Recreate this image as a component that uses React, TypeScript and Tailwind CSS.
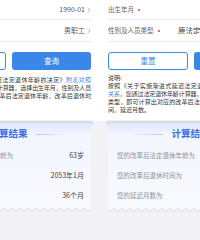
import React from 'react';

type Variant = 'left' | 'right';

const rows = [
  { label: '您的改革后法定退休年龄为', value: '63岁' },
  { label: '您的改革后退休时间为', value: '2053年1月' },
  { label: '您的延迟月数为', value: '36个月' },
];

// wave edge under the result card
const waveD = (() => {
  let d = 'M0,2';
  for (let x = 0; x < 168; x += 8) d += ' q2,3 4,0 q2,-3 4,0';
  return d;
})();

const Chevron = () => (
  <svg width="4" height="6" viewBox="0 0 4 6" className="ml-[2px]">
    <polyline points="0.5,0.5 3,3 0.5,5.5" fill="none" stroke="#b5b5b5" strokeWidth="0.8" />
  </svg>
);

const Dot = () => <span className="ml-[4px] w-[2px] h-[2px] rounded-full bg-[#f03c3c]" />;

function Page({ variant }: { variant: Variant }) {
  const isLeft = variant === 'left';
  return (
    <div className="w-[169px] shrink-0 flex flex-col">
      {/* form */}
      <div className="h-[120px] bg-white flex flex-col">
        <div className="h-[20px] mx-[1px] px-[1px] border-b border-[#ededed] flex items-center justify-between">
          <span className="text-[6.5px] leading-none text-[#666] flex items-center">
            出生年月
            <Dot />
          </span>
          <span className="text-[7px] leading-none text-[#555] flex items-center">
            1990-01
            <Chevron />
          </span>
        </div>
        <div className="h-[22px] mx-[1px] px-[1px] border-b border-[#ededed] flex items-center">
          <span className="w-[70px] shrink-0 text-[6.5px] leading-none text-[#666] flex items-center">
            性别及人员类型
            <Dot />
          </span>
          {isLeft ? (
            <span className="flex-1 min-w-0 flex justify-end items-center text-[7px] leading-none text-[#555]">
              男职工
              <Chevron />
            </span>
          ) : (
            <span className="flex-1 min-w-0 whitespace-nowrap overflow-hidden text-[7.5px] leading-none text-[#333]">
              原法定退休年龄50周岁女职工
            </span>
          )}
        </div>
        <div className="mt-[10px] px-[2px] flex gap-[6px]">
          <div className="w-[80px] h-[18px] shrink-0 border border-[#3d8ae6] rounded-[3px] flex items-center justify-center text-[7.5px] text-[#3d8ae6]">
            重置
          </div>
          <div className="w-[79px] h-[18px] shrink-0 bg-[#3a87e8] rounded-[3px] flex items-center justify-center text-[7.5px] text-white">
            查询
          </div>
        </div>
        <div className={`${isLeft ? 'mt-[-2px]' : 'mt-[4px]'} px-[2px] text-[6px] leading-[8px] text-[#333]`}>
          <div>说明:</div>
          <div className="whitespace-nowrap [text-align-last:justify]">
            按照《关于实施渐进式延迟法定退休年龄的决定》<span className="text-[#3a87e8]">附表对照</span>
          </div>
          <div className="whitespace-nowrap tracking-[-0.2px] [text-align-last:justify]">
            <span className="text-[#3a87e8]">关系</span>，您通过法定退休年龄计算器，选择出生年月，性别及人员
          </div>
          <div className="whitespace-nowrap tracking-[-0.2px] [text-align-last:justify]">
            类型，即可计算出对应的改革后法定退休年龄，改革后退休时
          </div>
          <div>间，延迟月数。</div>
        </div>
      </div>

      {/* result card */}
      <div className="flex-1 bg-[#f2f2f4] pt-[1px]">
        <div className="h-[4px] rounded-full bg-[#d7dae1]" />
        <div className="mx-[2px] -mt-[2px] bg-linear-to-b from-[#dfe7fa] via-[#f3f6fd] via-15% to-[#f7f9fe] flex flex-col">
          <div className="h-[22px] flex items-center justify-center gap-[8px]">
            <div className="w-[30px] h-px bg-linear-to-r from-[#eef2fc] to-[#b8c8f0]" />
            <span className="text-[9.5px] font-bold leading-none text-[#3a6fe6]">计算结果</span>
            <div className="w-[30px] h-px bg-linear-to-r from-[#b8c8f0] to-[#eef2fc]" />
          </div>
          {rows.map(r => (
            <div key={r.label} className="h-[20px] pl-[9px] pr-[7px] flex items-center justify-between">
              <span className="text-[6.5px] leading-none text-[#8e929b]">{r.label}</span>
              <span className="text-[7px] leading-none text-[#444]">{r.value}</span>
            </div>
          ))}
          <div className="h-[3px]" />
        </div>
        <svg width="165" height="6" viewBox="0 0 165 6" className="block mx-[2px]">
          <path d={`${waveD} L168,0 L0,0 Z`} fill="#f7f9fe" />
          <path d={waveD} fill="none" stroke="#ccd1dc" strokeWidth="0.8" />
        </svg>
      </div>
    </div>
  );
}

export default function App() {
  return (
    <div className="w-[200px] h-[240px] flex bg-[#f2f2f4] overflow-hidden font-['Noto_Sans_CJK_SC','Noto_Sans',sans-serif]">
      <div className="w-[93px] shrink-0 overflow-hidden flex">
        <div className="ml-[-76px] flex">
          <Page variant="left" />
        </div>
      </div>
      <div className="w-[13px] shrink-0 flex flex-col">
        <div className="h-[121px] bg-white" />
      </div>
      <div className="w-[94px] shrink-0 overflow-hidden flex">
        <Page variant="right" />
      </div>
    </div>
  );
}
